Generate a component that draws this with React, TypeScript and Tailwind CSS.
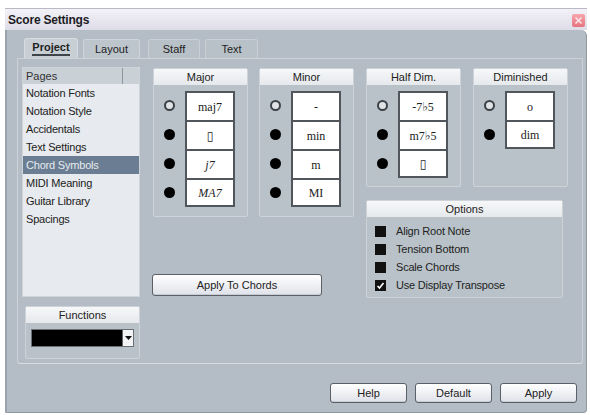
import React from 'react';

const font = { fontFamily: '"Liberation Sans", Arial, sans-serif' };

const pages = [
  'Notation Fonts',
  'Notation Style',
  'Accidentals',
  'Text Settings',
  'Chord Symbols',
  'MIDI Meaning',
  'Guitar Library',
  'Spacings',
];

type Row = { label: string; filled: boolean; italic?: boolean };

const groups: { title: string; rows: Row[]; h: string }[] = [
  {
    title: 'Major',
    h: 'h-[149px]',
    rows: [
      { label: 'maj7', filled: false },
      { label: '▯', filled: true },
      { label: 'j7', filled: true, italic: true },
      { label: 'MA7', filled: true, italic: true },
    ],
  },
  {
    title: 'Minor',
    h: 'h-[149px]',
    rows: [
      { label: '-', filled: false },
      { label: 'min', filled: true },
      { label: 'm', filled: true },
      { label: 'MI', filled: true },
    ],
  },
  {
    title: 'Half Dim.',
    h: 'h-[119px]',
    rows: [
      { label: '-7♭5', filled: false },
      { label: 'm7♭5', filled: true },
      { label: '▯', filled: true },
    ],
  },
  {
    title: 'Diminished',
    h: 'h-[119px]',
    rows: [
      { label: 'o', filled: false },
      { label: 'dim', filled: true },
    ],
  },
];

function GroupHeader({ title }: { title: string }) {
  return (
    <div className="h-[16px] bg-gradient-to-b from-[#f6f7f9] to-[#e6e9ec] flex items-center justify-center text-[11px] text-[#222] leading-none">
      {title}
    </div>
  );
}

function ChordGroup({ title, rows, h }: { title: string; rows: Row[]; h: string }) {
  return (
    <div className={`w-[95px] ${h} bg-[#b9c2c9] border border-[#cdd3d8] rounded-[2px] flex flex-col`}>
      <GroupHeader title={title} />
      <div className="flex flex-col mt-[6px]">
        {rows.map((r, i) => (
          <div key={i} className="flex items-center h-[29px]">
            <div className="w-[31px] flex justify-center">
              {r.filled ? (
                <div className="w-[11px] h-[11px] rounded-full bg-black" />
              ) : (
                <div className="w-[11px] h-[11px] rounded-full border-[2px] border-[#3c4248] bg-[#dfe3e6]" />
              )}
            </div>
            <div
              className={`w-[50px] h-[29px] bg-white border-x-2 border-t-2 border-[#50565c] ${
                i === rows.length - 1 ? 'border-b-2' : ''
              } flex items-center justify-center text-[12px] text-[#222] ${r.italic ? 'italic' : ''}`}
              style={{ fontFamily: '"Liberation Serif", "DejaVu Serif", serif' }}
            >
              {r.label}
            </div>
          </div>
        ))}
      </div>
    </div>
  );
}

function Button({ label, w, h = 'h-[20px]' }: { label: string; w: string; h?: string }) {
  return (
    <div
      className={`${w} ${h} rounded-[3px] border border-[#5a6066] bg-gradient-to-b from-[#ffffff] to-[#dfe2ea] shadow-[inset_0_-1px_0_#c7cbd4] flex items-center justify-center text-[11px] text-[#222]`}
    >
      {label}
    </div>
  );
}

export default function App() {
  const options = [
    { label: 'Align Root Note', checked: false },
    { label: 'Tension Bottom', checked: false },
    { label: 'Scale Chords', checked: false },
    { label: 'Use Display Transpose', checked: true },
  ];

  return (
    <div className="w-[590px] h-[415px] bg-white pt-[8px] pl-[5px] overflow-hidden" style={font}>
      <div className="w-[582px] h-[405px] flex flex-col">
        {/* title bar */}
        <div className="h-[22px] bg-gradient-to-b from-[#f3f2f7] to-[#dedce8] border-t border-[#b9b8c4] flex items-center justify-between pl-[3px] pr-[2px]">
          <span className="text-[12px] font-bold text-[#1c1c24] tracking-[-0.2px]">Score Settings</span>
          <div className="w-[13px] h-[13px] bg-gradient-to-b from-[#f7a6ad] to-[#e5737f] rounded-[2px] flex items-center justify-center mt-[2px]">
            <svg width="9" height="9" viewBox="0 0 9 9">
              <path d="M1.5 1.5 L7.5 7.5 M7.5 1.5 L1.5 7.5" stroke="#fbe6e8" strokeWidth="1.6" />
            </svg>
          </div>
        </div>

        {/* body */}
        <div className="flex-1 bg-[#b4bdc5] border-l-2 border-[#9aa3ab] border-r border-b border-r-[#8f989f] border-b-[#8f989f] rounded-br-[4px] rounded-tr-[6px] pl-[10px] pr-[3px] pt-[8px] flex flex-col">
          {/* tabs */}
          <div className="flex items-end h-[20px] pl-[7px] gap-[5px] text-[11px] text-[#222]">
            <div className="w-[54px] h-[20px] bg-[#c7ced4] border border-b-0 border-[#d7dce0] rounded-t-[3px] flex items-center justify-center font-bold">
              <span className="border-b-2 border-[#3e444a] leading-[13px]">Project</span>
            </div>
            <div className="w-[57px] h-[19px] bg-[#bec6cd] border border-b-0 border-[#cfd5da] rounded-t-[3px] flex items-center justify-center">
              Layout
            </div>
            <div className="w-[52px] h-[19px] ml-[3px] bg-[#b9c1c8] border border-b-0 border-[#cad0d5] rounded-t-[3px] flex items-center justify-center">
              Staff
            </div>
            <div className="w-[53px] h-[19px] bg-[#b9c1c8] border border-b-0 border-[#cad0d5] rounded-t-[3px] flex items-center justify-center">
              Text
            </div>
          </div>

          {/* inner panel */}
          <div className="w-[566px] h-[306px] border border-[#cdd3d8] border-b-[#d8dde1] rounded-b-[3px] flex">
            {/* left column */}
            <div className="w-[118px] ml-[4px] mt-[8px] flex flex-col">
              <div className="h-[230px] bg-[#e7eaee] border border-[#cfd4d9] flex flex-col">
                <div className="h-[16px] bg-[#c9d0d6] flex text-[11px] text-[#333] leading-[16px]">
                  <div className="w-[100px] pl-[3px] border-r border-[#8f979e]">Pages</div>
                </div>
                <div className="flex flex-col text-[11px] text-[#222] tracking-[-0.2px]">
                  {pages.map((p) => (
                    <div
                      key={p}
                      className={`h-[18px] leading-[18px] pl-[3px] ${
                        p === 'Chord Symbols' ? 'bg-[#6a7d92] text-[#e6ebf0]' : ''
                      }`}
                    >
                      {p}
                    </div>
                  ))}
                </div>
              </div>

              <div className="mt-[9px] h-[53px] ml-[3px] bg-[#b9c2c9] border border-[#cdd3d8] rounded-[2px] flex flex-col">
                <GroupHeader title="Functions" />
                <div className="mt-[6px] ml-[5px] w-[103px] h-[18px] bg-black border border-[#6a7076] flex justify-end">
                  <div className="w-[11px] h-full bg-[#f2f3f5] border-l border-[#666] flex items-center justify-center">
                    <svg width="7" height="4" viewBox="0 0 7 4">
                      <path d="M0 0 L7 0 L3.5 4 Z" fill="#111" />
                    </svg>
                  </div>
                </div>
              </div>
            </div>

            {/* right area */}
            <div className="ml-[13px] mt-[9px] flex gap-[12px]">
              <div className="flex flex-col">
                <div className="flex gap-[11px]">
                  <ChordGroup {...groups[0]} />
                  <ChordGroup {...groups[1]} />
                </div>
                <div className="mt-[57px] -ml-[1px]">
                  <Button label="Apply To Chords" w="w-[170px]" h="h-[22px]" />
                </div>
              </div>

              <div className="flex flex-col">
                <div className="flex gap-[12px]">
                  <ChordGroup {...groups[2]} />
                  <ChordGroup {...groups[3]} />
                </div>
                <div className="mt-[13px] w-[197px] h-[98px] bg-[#b9c2c9] border border-[#cdd3d8] rounded-[2px] flex flex-col">
                  <GroupHeader title="Options" />
                  <div className="flex flex-col mt-[5px] pl-[8px] text-[11px] text-[#222] tracking-[-0.2px]">
                    {options.map((o) => (
                      <div key={o.label} className="h-[18px] flex items-center gap-[10px]">
                        <div className="w-[11px] h-[11px] bg-[#111] flex items-center justify-center">
                          {o.checked && (
                            <svg width="9" height="9" viewBox="0 0 9 9">
                              <path d="M1.5 5 L3.5 7 L7.5 2" stroke="#fff" strokeWidth="1.6" fill="none" />
                            </svg>
                          )}
                        </div>
                        <span>{o.label}</span>
                      </div>
                    ))}
                  </div>
                </div>
              </div>
            </div>
          </div>

          {/* bottom buttons */}
          <div className="flex justify-end gap-[8px] mt-[19px] pr-[6px]">
            <Button label="Help" w="w-[77px]" />
            <Button label="Default" w="w-[77px]" />
            <Button label="Apply" w="w-[77px]" />
          </div>
        </div>
      </div>
    </div>
  );
}
